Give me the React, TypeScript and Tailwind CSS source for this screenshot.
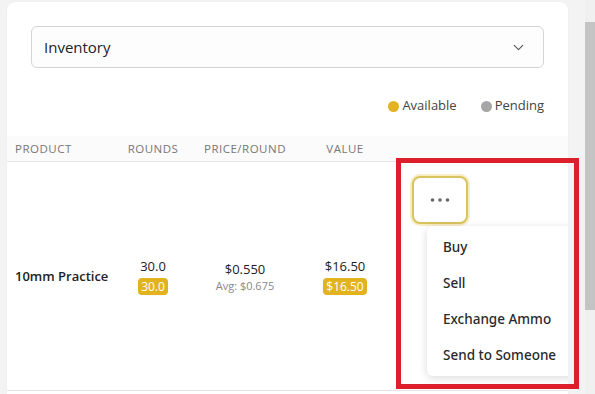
import React from 'react';
import { ChevronDown } from 'lucide-react';

const menuItems = ['Buy', 'Sell', 'Exchange Ammo', 'Send to Someone'];

const Badge = ({ children }: { children: React.ReactNode }) => (
  <span className="mt-[3px] rounded-[4px] bg-[#e3b21f] px-[3px] text-[12px] leading-[17px] text-white">{children}</span>
);

const App = () => {
  return (
    <div
      className="relative flex h-[394px] w-[595px] overflow-hidden bg-[#f3f3f3] text-[#222]"
      style={{ fontFamily: '"Open Sans", "Noto Sans", sans-serif' }}
    >
      <div className="min-w-0 flex-1 pl-[7px] pr-[17px] pt-[2px]">
        <div className="flex h-full flex-col overflow-hidden rounded-t-lg bg-white shadow-[0_0_2px_rgba(0,0,0,0.06)]">
          {/* Filter */}
          <div className="px-6 pt-6">
            <div className="flex h-[42px] items-center justify-between rounded-md border border-[#d4d4d4] bg-[#fdfdfd] pl-3 pr-4">
              <span className="text-[15px]">Inventory</span>
              <ChevronDown size={17} strokeWidth={1.6} className="text-[#555]" />
            </div>
            <div className="mt-7 flex h-5 items-center justify-end gap-6 text-[13px] text-[#444]">
              <div className="flex items-center gap-[3px]">
                <span className="h-[11px] w-[11px] shrink-0 rounded-full bg-[#e3b21f]" />
                <span>Available</span>
              </div>
              <div className="flex items-center gap-[3px]">
                <span className="h-[11px] w-[11px] shrink-0 rounded-full bg-[#a6a6a6]" />
                <span>Pending</span>
              </div>
            </div>
          </div>

          {/* Table */}
          <div className="mt-[20px] grid grid-cols-[108px_76px_108px_92px_minmax(0,1fr)] border-b border-[#e6e6e6] bg-[#fbfbfb] py-[4px] text-[11.5px] uppercase tracking-[0.5px] text-[#777]">
            <div className="pl-2">Product</div>
            <div className="text-center">Rounds</div>
            <div className="text-center">Price/Round</div>
            <div className="text-center">Value</div>
            <div />
          </div>
          <div className="grid grid-cols-[108px_76px_108px_92px_minmax(0,1fr)] items-center border-b border-[#e6e6e6]">
            <div className="pl-2 text-[13px] font-semibold">10mm Practice</div>
            <div className="flex flex-col items-center text-[13px]">
              <span className="leading-[18px]">30.0</span>
              <Badge>30.0</Badge>
            </div>
            <div className="flex flex-col items-center pt-[2px]">
              <span className="text-[13px] font-medium leading-[18px]">$0.550</span>
              <span className="text-[11px] leading-[16px] text-[#888]">Avg: $0.675</span>
            </div>
            <div className="flex flex-col items-center text-[13px]">
              <span className="leading-[18px]">$16.50</span>
              <Badge>$16.50</Badge>
            </div>
            <div className="flex min-w-0 flex-col items-start py-[14px] pl-[21px]">
              <button className="flex h-[48px] w-[56px] items-center justify-center rounded-lg border-2 border-[#d9c35e] bg-white ring-2 ring-[#f6edc4]">
                <svg width="20" height="6" viewBox="0 0 20 6" fill="#666">
                  <circle cx="2.5" cy="3" r="1.8" />
                  <circle cx="10" cy="3" r="1.8" />
                  <circle cx="17.5" cy="3" r="1.8" />
                </svg>
              </button>
              <div className="ml-[15px] mt-[2px] w-[160px] shrink-0 rounded-md bg-white py-[3px] shadow-[0_2px_8px_rgba(0,0,0,0.15)]">
                {menuItems.map((item) => (
                  <div
                    key={item}
                    className="flex h-9 items-center whitespace-nowrap px-4 text-[13.5px] font-medium text-[#2a2a2a]"
                    style={{ fontFamily: '"Noto Sans", sans-serif' }}
                  >
                    {item}
                  </div>
                ))}
              </div>
            </div>
          </div>
        </div>
      </div>

      {/* Scrollbar */}
      <div className="w-[10px] shrink-0 bg-[#f0f0f0]">
        <div className="mt-[22px] h-[288px] bg-[#c4c4c4]" />
      </div>

      {/* Annotation */}
      <div className="pointer-events-none absolute left-[396px] top-[158px] h-[231px] w-[183px] border-[5px] border-[#dc1f2b]" />
    </div>
  );
};

export default App;
